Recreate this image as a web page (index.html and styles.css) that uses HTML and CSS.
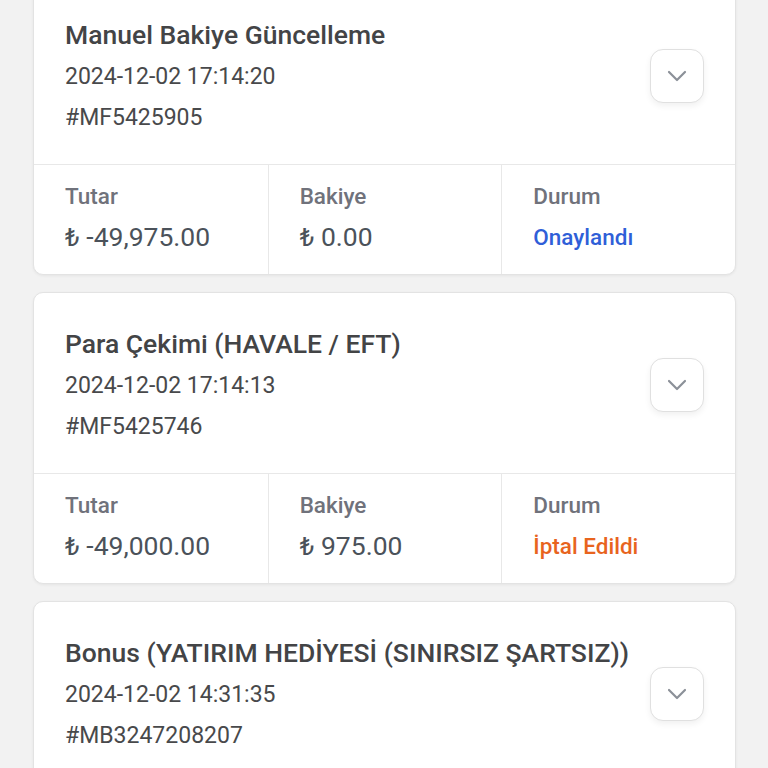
FILE: index.html
```html
<!DOCTYPE html>
<html lang="tr">
<head>
  <meta charset="UTF-8">
  <meta name="viewport" content="width=device-width, initial-scale=1.0">
  <title>Hesap Hareketleri</title>
  <link rel="stylesheet" href="styles.css">
</head>
<body>
  <div class="transactions">
    <div class="tx-card">
      <div class="tx-head">
        <div class="tx-info">
          <div class="tx-title">Manuel Bakiye Güncelleme</div>
          <div class="tx-meta">2024-12-02 17:14:20</div>
          <div class="tx-meta">#MF5425905</div>
        </div>
        <button class="toggle-btn"><svg width="20" height="12" viewBox="0 0 20 12"><path d="M2 2l8 8 8-8" fill="none" stroke="#8b9098" stroke-width="2.2" stroke-linecap="round" stroke-linejoin="round"/></svg></button>
      </div>
      <div class="tx-stats">
        <div class="stat">
          <div class="stat-label">Tutar</div>
          <div class="stat-value">₺ -49,975.00</div>
        </div>
        <div class="stat">
          <div class="stat-label">Bakiye</div>
          <div class="stat-value">₺ 0.00</div>
        </div>
        <div class="stat">
          <div class="stat-label">Durum</div>
          <div class="stat-value status-ok">Onaylandı</div>
        </div>
      </div>
    </div>

    <div class="tx-card">
      <div class="tx-head">
        <div class="tx-info">
          <div class="tx-title">Para Çekimi (HAVALE / EFT)</div>
          <div class="tx-meta">2024-12-02 17:14:13</div>
          <div class="tx-meta">#MF5425746</div>
        </div>
        <button class="toggle-btn"><svg width="20" height="12" viewBox="0 0 20 12"><path d="M2 2l8 8 8-8" fill="none" stroke="#8b9098" stroke-width="2.2" stroke-linecap="round" stroke-linejoin="round"/></svg></button>
      </div>
      <div class="tx-stats">
        <div class="stat">
          <div class="stat-label">Tutar</div>
          <div class="stat-value">₺ -49,000.00</div>
        </div>
        <div class="stat">
          <div class="stat-label">Bakiye</div>
          <div class="stat-value">₺ 975.00</div>
        </div>
        <div class="stat">
          <div class="stat-label">Durum</div>
          <div class="stat-value status-cancel">İptal Edildi</div>
        </div>
      </div>
    </div>

    <div class="tx-card">
      <div class="tx-head">
        <div class="tx-info">
          <div class="tx-title">Bonus (YATIRIM HEDİYESİ (SINIRSIZ ŞARTSIZ))</div>
          <div class="tx-meta">2024-12-02 14:31:35</div>
          <div class="tx-meta">#MB3247208207</div>
        </div>
        <button class="toggle-btn"><svg width="20" height="12" viewBox="0 0 20 12"><path d="M2 2l8 8 8-8" fill="none" stroke="#8b9098" stroke-width="2.2" stroke-linecap="round" stroke-linejoin="round"/></svg></button>
      </div>
    </div>
  </div>
</body>
</html>
```

FILE: styles.css
```css
body {
  margin: 0;
  background-color: #f2f2f2;
  font-family: Roboto, "Noto Sans", Arial, sans-serif;
  overflow: hidden;
}

.transactions {
  display: flex;
  flex-direction: column;
  gap: 17px;
  padding: 0 32px 0 33px;
  margin-top: -17px;
}

.tx-card {
  background-color: #fff;
  border: 1px solid #e3e3e3;
  border-radius: 10px;
  box-shadow: 0 1px 3px rgba(0, 0, 0, 0.06);
  overflow: hidden;
}

.tx-head {
  display: flex;
  align-items: center;
  justify-content: space-between;
  padding: 30px 31px 26px 31px;
}

.tx-title {
  font-size: 26.5px;
  font-weight: 500;
  line-height: 42px;
  color: #434446;
}

.tx-meta {
  font-size: 23px;
  line-height: 41px;
  color: #48494b;
}

.toggle-btn {
  width: 54px;
  height: 54px;
  border: 1px solid #e0e0e0;
  border-radius: 13px;
  background-color: #fff;
  box-shadow: 0 3px 6px rgba(0, 0, 0, 0.06);
  display: flex;
  align-items: center;
  justify-content: center;
  padding: 0;
  flex-shrink: 0;
}

.tx-stats {
  display: grid;
  grid-template-columns: repeat(3, 1fr);
  border-top: 1px solid #e8e8e8;
}

.stat {
  padding: 13px 31px 19px 31px;
  border-left: 1px solid #e8e8e8;
}

.stat:first-child {
  border-left: none;
}

.stat-label {
  font-size: 22.5px;
  font-weight: 500;
  line-height: 36px;
  color: #70727b;
}

.stat-value {
  margin-top: 5px;
  font-size: 26.5px;
  line-height: 36px;
  color: #4b525a;
}

.status-ok {
  font-size: 22.5px;
  font-weight: 500;
  color: #2f5fd8;
}

.status-cancel {
  font-size: 22.5px;
  font-weight: 500;
  color: #e8641e;
}
```
